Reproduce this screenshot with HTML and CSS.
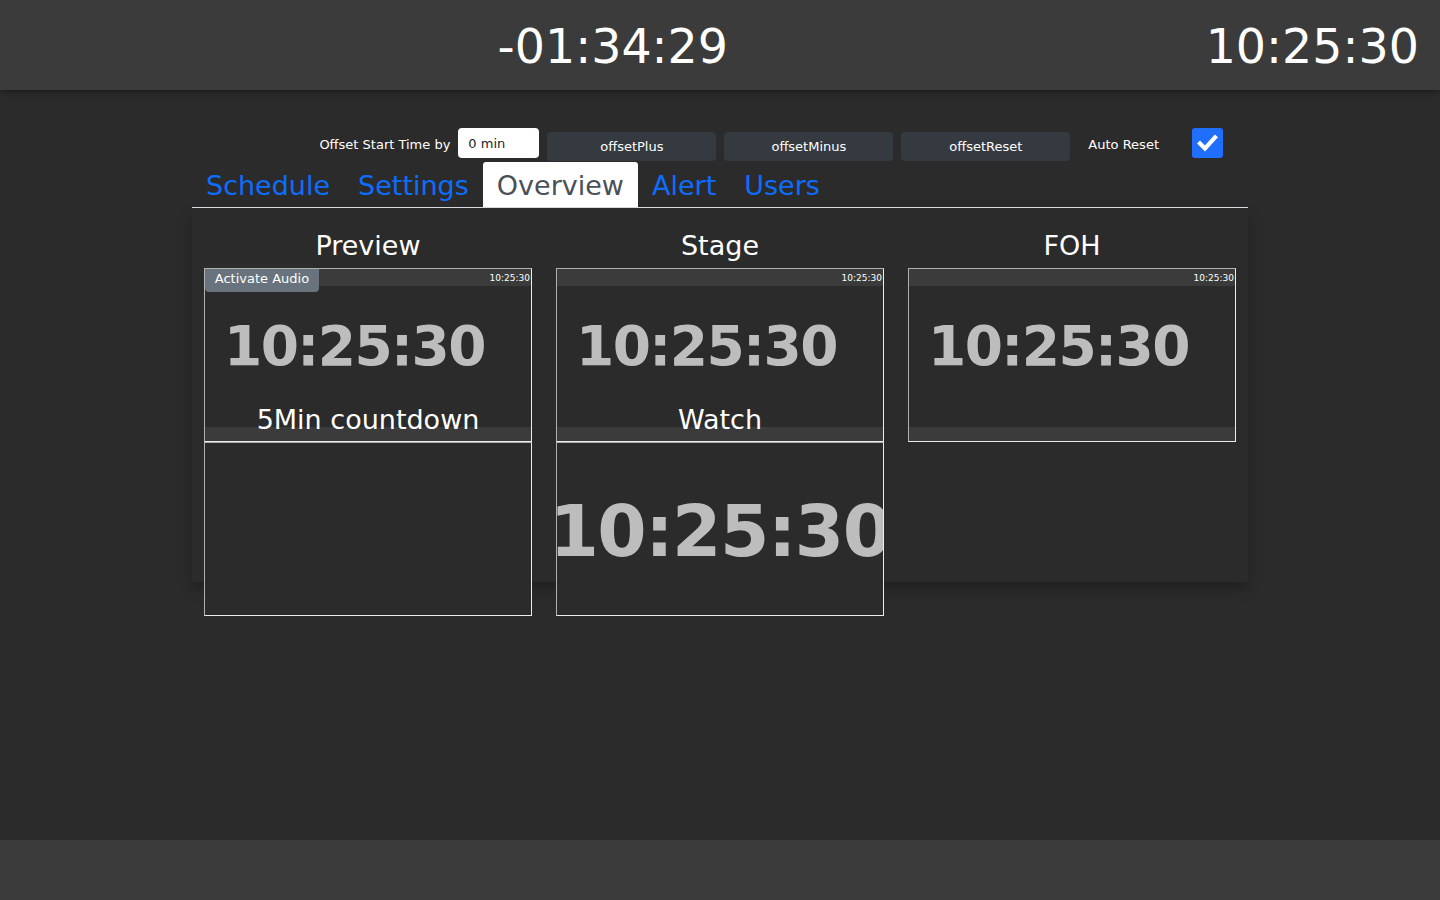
FILE: index.html
```html
<!DOCTYPE html>
<html lang="en">
<head>
<meta charset="utf-8">
<title>Overview</title>
<link rel="stylesheet" href="styles.css">
</head>
<body>
<header class="topbar">
  <div class="topbar-slot"></div>
  <div class="topbar-clock">-01:34:29</div>
  <div class="topbar-clock">10:25:30</div>
</header>
<main class="main">
  <div class="container">
    <div class="controls">
      <label class="ctrl-label">Offset Start Time by</label>
      <div class="ctrl-input">0 min</div>
      <button class="ctrl-btn">offsetPlus</button>
      <button class="ctrl-btn">offsetMinus</button>
      <button class="ctrl-btn">offsetReset</button>
      <span class="ctrl-label auto-label">Auto Reset</span>
      <span class="checkbox">
        <svg viewBox="0 0 31 30" width="31" height="30"><path d="M8 15.5 L13 20.5 L23 9.5" fill="none" stroke="#fff" stroke-width="4.2" stroke-linecap="square" stroke-linejoin="miter"/></svg>
      </span>
    </div>
    <nav class="tabs">
      <a class="tab">Schedule</a>
      <a class="tab">Settings</a>
      <a class="tab active">Overview</a>
      <a class="tab">Alert</a>
      <a class="tab">Users</a>
    </nav>
    <section class="panel">
      <div class="col">
        <h2 class="col-title">Preview</h2>
        <div class="frame">
          <div class="bar-top"><span class="mini-time">10:25:30</span></div>
          <div class="frame-body"><div class="big-clock">10:25:30</div></div>
          <div class="bar-bottom"></div>
          <div class="caption">5Min countdown</div>
          <button class="audio-btn">Activate Audio</button>
        </div>
        <div class="frame frame-plain"></div>
      </div>
      <div class="col">
        <h2 class="col-title">Stage</h2>
        <div class="frame">
          <div class="bar-top"><span class="mini-time">10:25:30</span></div>
          <div class="frame-body"><div class="big-clock">10:25:30</div></div>
          <div class="bar-bottom"></div>
          <div class="caption">Watch</div>
        </div>
        <div class="frame frame-plain frame-center"><div class="huge-clock">10:25:30</div></div>
      </div>
      <div class="col">
        <h2 class="col-title">FOH</h2>
        <div class="frame">
          <div class="bar-top"><span class="mini-time">10:25:30</span></div>
          <div class="frame-body"><div class="big-clock">10:25:30</div></div>
          <div class="bar-bottom"></div>
        </div>
      </div>
    </section>
  </div>
</main>
<footer class="footer"></footer>
</body>
</html>
```

FILE: styles.css
```css
* { box-sizing: border-box; }
html, body { margin: 0; padding: 0; }
body {
  width: 1440px;
  height: 900px;
  overflow: hidden;
  background: #2b2b2b;
  color: #fff;
  font-family: "DejaVu Sans", Verdana, sans-serif;
  display: flex;
  flex-direction: column;
}
.topbar {
  height: 90px;
  flex: none;
  background: #3b3b3b;
  box-shadow: 0 2px 6px rgba(0,0,0,0.35);
  display: flex;
  justify-content: space-between;
  align-items: center;
  padding: 0 21px 0 20px;
  position: relative;
  z-index: 2;
}
.topbar-clock {
  font-size: 47.5px;
  line-height: 56px;
  color: #fff;
  padding-top: 4px;
}
.main { flex: 1; }
.footer { height: 60px; flex: none; background: #3b3b3b; }
.container { width: 1056px; margin: 0 auto; }
.controls {
  margin-top: 38px;
  height: 30px;
  display: flex;
  justify-content: flex-end;
  align-items: center;
  padding-right: 25px;
}
.ctrl-label { font-size: 13px; color: #fff; margin-right: 8px; padding-top: 3px; }
.ctrl-input {
  width: 81px;
  height: 30px;
  background: #fff;
  border-radius: 4px;
  color: #212529;
  font-size: 13px;
  line-height: 31px;
  padding-left: 10px;
}
.ctrl-btn {
  width: 169px;
  height: 29px;
  margin-left: 8px;
  margin-top: 6px;
  background: #343a40;
  border: 0;
  border-radius: 4px;
  color: #fff;
  font-family: inherit;
  font-size: 13px;
  padding: 1px 0 0;
}
.auto-label { margin-left: 18px; margin-right: 33px; }
.checkbox {
  width: 31px;
  height: 30px;
  background: #1f6efc;
  border-radius: 3px;
  display: block;
}
.checkbox svg { display: block; }
.tabs {
  margin-top: 4px;
  display: flex;
  border-bottom: 1px solid #dee2e6;
}
.tab {
  display: block;
  height: 45px;
  padding: 0 14px;
  font-size: 27px;
  line-height: 48px;
  color: #0d6efd;
  border-radius: 3px 3px 0 0;
}
.tab.active { background: #fff; color: #495057; }
.panel {
  height: 374px;
  display: grid;
  grid-template-columns: repeat(3, 1fr);
  box-shadow: 0 6px 12px rgba(0,0,0,0.25);
  padding-top: 20px;
}
.col { display: flex; flex-direction: column; align-items: center; }
.col-title {
  margin: 0 0 5px;
  font-weight: normal;
  font-size: 27px;
  line-height: 35px;
  color: #fff;
}
.frame {
  width: 328px;
  height: 174px;
  position: relative;
  background: #2b2b2b;
  border: 1px solid;
  border-color: #b0b0b0 #ececec #ececec #b0b0b0;
  display: flex;
  flex-direction: column;
  overflow: hidden;
}
.bar-top {
  height: 17px;
  background: #3b3b3b;
  display: flex;
  justify-content: flex-end;
  align-items: center;
  padding-right: 1px;
}
.mini-time { font-size: 9px; color: #fff; }
.frame-body { flex: 1; padding: 32px 0 0 19px; }
.big-clock {
  font-weight: bold;
  font-size: 55px;
  line-height: 56px;
  color: #bdbdbd;
  letter-spacing: -1.6px;
  white-space: nowrap;
}
.bar-bottom { height: 14px; background: #3b3b3b; }
.caption {
  position: absolute;
  left: 0;
  right: 0;
  bottom: 4px;
  text-align: center;
  font-size: 27px;
  line-height: 34px;
  color: #fff;
}
.audio-btn {
  position: absolute;
  top: 0;
  left: 0;
  width: 114px;
  height: 23px;
  background: #68737d;
  border: 0;
  border-radius: 0 0 4px 4px;
  color: #fff;
  font-family: inherit;
  font-size: 13px;
  padding: 0 0 5px;
  line-height: 17px;
}
.frame-plain { display: block; }
.frame-center { display: flex; justify-content: center; align-items: center; }
.huge-clock {
  font-weight: bold;
  font-size: 71px;
  line-height: 80px;
  color: #bdbdbd;
  letter-spacing: -1.5px;
  white-space: nowrap;
  flex: none;
  padding-top: 6px;
}
```
